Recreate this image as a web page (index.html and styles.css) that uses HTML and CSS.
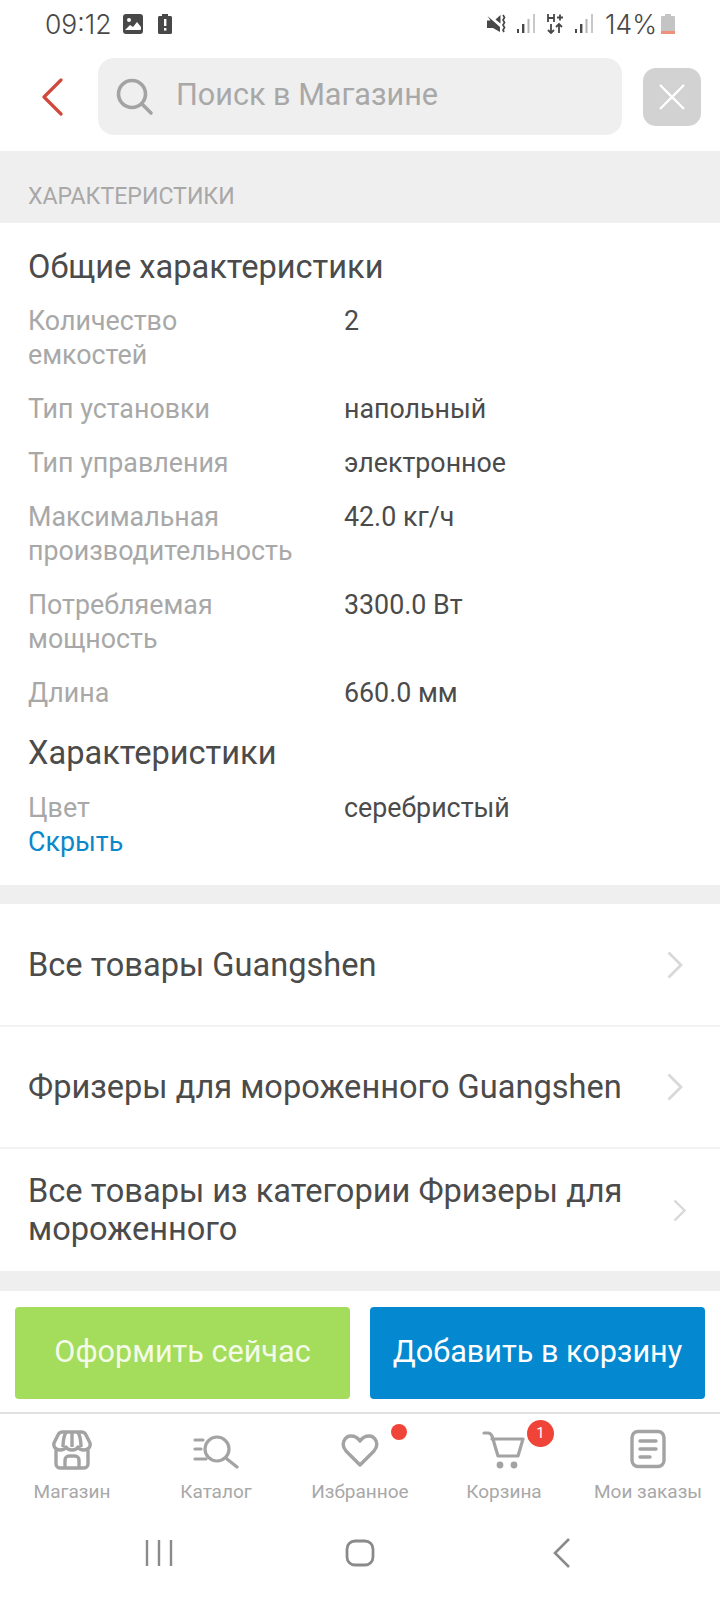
FILE: index.html
```html
<!DOCTYPE html>
<html>
<head>
  <meta charset="utf-8">
  <link rel="stylesheet" href="styles.css">
</head>
<body>
  <div class="status">
    <span class="clock">09:12</span>
    <svg width="22" height="22" viewBox="0 0 22 22"><rect x="1" y="1" width="20" height="20" rx="3" fill="#484848"/><circle cx="7" cy="7" r="2" fill="#fff"/><path d="M3 17l5-5 3 2 4-5 4 5v2a1 1 0 0 1-1 1H4z" fill="#fff"/></svg>
    <svg class="st-gap" width="16" height="22" viewBox="0 0 16 22"><path d="M5 1h6v2h3a2 2 0 0 1 1 1v16a2 2 0 0 1-1 1H2a2 2 0 0 1-1-1V4a2 2 0 0 1 1-1h3z" fill="#484848"/><rect x="7" y="6" width="2.400" height="7" fill="#fff"/><rect x="7" y="15" width="2.400" height="2.600" fill="#fff"/></svg>
    <span class="grow"></span>
    <svg width="20" height="22" viewBox="0 0 20 22"><path d="M1.500 3L14 14v5l-7-4H1V7.500h3.500z" fill="#484848"/><path d="M9.500 6.500L14.500 2v8.500z" fill="#484848"/><path d="M17 2l1.500 2.500-1.500 2.500 1.500 2.500-1.500 2.500 1.500 2.500-1.500 2.500 1 2" fill="none" stroke="#484848" stroke-width="1.700"/></svg>
    <svg class="sig" width="20" height="22" viewBox="0 0 20 22"><rect x="1" y="16" width="2" height="4" fill="#484848"/><rect x="6" y="11" width="2.400" height="9" fill="#484848"/><rect x="11.500" y="6" width="2" height="14" fill="#b5b5b5"/><rect x="17" y="1" width="2" height="19" fill="#c8c8c8"/></svg>
    <svg class="sig" width="18" height="22" viewBox="0 0 18 22"><path d="M2 1v8M8 1v8M2 5h6M11 4.500h6M14 1.500v6" stroke="#484848" stroke-width="1.800" fill="none"/><path d="M5 11v9M2 17l3 3 3-3M13 20v-9M10 14l3-3 3 3" stroke="#484848" stroke-width="1.800" fill="none"/></svg>
    <svg class="sig" width="20" height="22" viewBox="0 0 20 22"><rect x="1" y="16" width="2" height="4" fill="#484848"/><rect x="6" y="11" width="2.400" height="9" fill="#484848"/><rect x="11.500" y="6" width="2" height="14" fill="#b5b5b5"/><rect x="17" y="1" width="2" height="19" fill="#c8c8c8"/></svg>
    <span class="pct">14%</span>
    <svg class="batt" width="14" height="20" viewBox="0 0 14 20"><path d="M4 0h6v2h3a1 1 0 0 1 1 1v16a1 1 0 0 1-1 1H1a1 1 0 0 1-1-1V3a1 1 0 0 1 1-1h3z" fill="#c4c4c4"/><path d="M0 17h14v2a1 1 0 0 1-1 1H1a1 1 0 0 1-1-1z" fill="#f0907a"/></svg>
  </div>

  <div class="topbar">
    <svg class="back" width="22" height="38" viewBox="0 0 22 38"><path d="M20 2L3 19l17 17" fill="none" stroke="#d0493c" stroke-width="3.200" stroke-linecap="round" stroke-linejoin="round"/></svg>
    <div class="search">
      <svg width="38" height="38" viewBox="0 0 38 38"><circle cx="16" cy="16" r="13.500" fill="none" stroke="#a3a3a3" stroke-width="3.600"/><path d="M26 26l9 9" stroke="#a3a3a3" stroke-width="3.600" stroke-linecap="round"/></svg>
      <span class="search-text">Поиск в Магазине</span>
    </div>
    <div class="close">
      <svg width="26" height="26" viewBox="0 0 26 26"><path d="M1 1l24 24M25 1L1 25" stroke="#fff" stroke-width="2.400"/></svg>
    </div>
  </div>

  <div class="section-head">ХАРАКТЕРИСТИКИ</div>

  <div class="specs">
    <div class="spec-title">Общие характеристики</div>
    <div class="row"><div class="key">Количество<br>емкостей</div><div class="val">2</div></div>
    <div class="row"><div class="key">Тип установки</div><div class="val">напольный</div></div>
    <div class="row"><div class="key">Тип управления</div><div class="val">электронное</div></div>
    <div class="row"><div class="key">Максимальная<br>производительность</div><div class="val">42.0 кг/ч</div></div>
    <div class="row"><div class="key">Потребляемая<br>мощность</div><div class="val">3300.0 Вт</div></div>
    <div class="row"><div class="key">Длина</div><div class="val">660.0 мм</div></div>
    <div class="spec-title second">Характеристики</div>
    <div class="row last"><div class="key">Цвет</div><div class="val">серебристый</div></div>
    <div class="hide">Скрыть</div>
  </div>

  <div class="links">
    <div class="link"><span>Все товары Guangshen</span><svg width="16" height="28" viewBox="0 0 16 28"><path d="M1.500 1.500L14 14 1.500 26.500" fill="none" stroke="#d8d8d8" stroke-width="2.800"/></svg></div>
    <div class="link"><span>Фризеры для мороженного Guangshen</span><svg width="16" height="28" viewBox="0 0 16 28"><path d="M1.500 1.500L14 14 1.500 26.500" fill="none" stroke="#d8d8d8" stroke-width="2.800"/></svg></div>
    <div class="link tall"><span>Все товары из категории Фризеры для мороженного</span><svg width="13" height="23" viewBox="0 0 13 23"><path d="M1.500 1.500L11.500 11.500 1.500 21.500" fill="none" stroke="#d8d8d8" stroke-width="2.400"/></svg></div>
  </div>

  <div class="buttons">
    <div class="btn green">Оформить сейчас</div>
    <div class="btn blue">Добавить в корзину</div>
  </div>

  <div class="tabs">
    <div class="tab">
      <svg width="42" height="42" viewBox="0 0 42 42" fill="none" stroke="#a3a3a3" stroke-width="3.400" stroke-linejoin="round"><path d="M11 4h20a5 5 0 0 1 4 3l4 8c1 4-2 7-6 7-3 0-5-1-6-3-1 2-3 3-6 3s-5-1-6-3c-1 2-3 3-6 3-4 0-7-3-6-7l4-8a5 5 0 0 1 4-3z"/><path d="M15 4c-2 4-3 9-3 15M27 4c2 4 3 9 3 15M21 4v15"/><path d="M5 22v14a4 4 0 0 0 4 4h24a4 4 0 0 0 4-4V22"/><path d="M14 40V32a4 4 0 0 1 4-4h6a4 4 0 0 1 4 4v8"/></svg>
      <span>Магазин</span>
    </div>
    <div class="tab">
      <svg width="46" height="42" viewBox="0 0 46 42" fill="none" stroke="#a3a3a3" stroke-width="3.200" stroke-linecap="round"><path d="M2 12h8M2 21h6M2 31h11"/><circle cx="24" cy="21" r="12"/><path d="M34 31l10 8"/></svg>
      <span>Каталог</span>
    </div>
    <div class="tab">
      <svg width="40" height="42" viewBox="0 0 40 42" fill="none" stroke="#a3a3a3" stroke-width="3.400" stroke-linejoin="round"><path d="M20 37L6 23C0 16 5 8 11 8c4 0 7 2 9 5 2-3 5-5 9-5 6 0 11 8 5 15z"/></svg>
      <span>Избранное</span>
      <i class="dot"></i>
    </div>
    <div class="tab">
      <svg width="44" height="42" viewBox="0 0 44 42" fill="none" stroke="#a3a3a3" stroke-width="3.200" stroke-linecap="round" stroke-linejoin="round"><path d="M2 5h4c2 0 3 1 4 3l6 20h20l5-17H10"/><circle cx="18" cy="37" r="1.800" fill="#a3a3a3"/><circle cx="32" cy="37" r="1.800" fill="#a3a3a3"/></svg>
      <span>Корзина</span>
      <i class="badge">1</i>
    </div>
    <div class="tab">
      <svg width="36" height="42" viewBox="0 0 36 42" fill="none" stroke="#a3a3a3" stroke-width="3.400" stroke-linecap="round"><rect x="2" y="3.500" width="32" height="35" rx="6"/><path d="M10 13h16M10 21h16M10 29h10"/></svg>
      <span>Мои заказы</span>
    </div>
  </div>

  <div class="navbar">
    <svg width="28" height="28" viewBox="0 0 28 28"><path d="M2 1v26M14 1v26M26 1v26" stroke="#8a8a8a" stroke-width="2.400"/></svg>
    <svg width="30" height="28" viewBox="0 0 30 28"><rect x="2" y="2" width="26" height="24" rx="8" fill="none" stroke="#8a8a8a" stroke-width="2.800"/></svg>
    <svg class="nav-back" width="18" height="30" viewBox="0 0 18 30"><path d="M16 1L2 15l14 14" fill="none" stroke="#8a8a8a" stroke-width="2.600"/></svg>
  </div>
</body>
</html>
```

FILE: styles.css
```css
html, body {
  margin: 0;
  height: 1600px;
  overflow: hidden;
  background: #fff;
  font-family: Roboto, "Noto Sans", sans-serif;
}
.status {
  height: 48px;
  padding: 0 45px 0 45px;
  display: flex;
  align-items: center;
  color: #484848;
}
.clock {
  font-family: Inter, Roboto, sans-serif;
  font-size: 26.500px;
  font-weight: 300;
  margin-right: 11px;
}
.st-gap {
  margin-left: 13px;
}
.grow {
  flex: 1;
}
.sig {
  margin-left: 10px;
}
.pct {
  font-family: Inter, Roboto, sans-serif;
  font-size: 26.500px;
  font-weight: 300;
  margin-left: 11px;
}
.batt {
  margin-left: 4px;
}
.topbar {
  height: 103px;
  display: flex;
  align-items: center;
  padding: 0 0 0 41px;
  box-sizing: border-box;
}
.back {
  margin-right: 35px;
  margin-bottom: 6px;
}
.search {
  width: 524px;
  height: 77px;
  margin-bottom: 6px;
  background: #efefef;
  border-radius: 16px;
  display: flex;
  align-items: center;
  padding-left: 18px;
  box-sizing: border-box;
}
.search-text {
  font-size: 30.600px;
  color: #a8a8a8;
  margin-left: 22px;
  margin-bottom: 4px;
}
.close {
  width: 58px;
  height: 58px;
  margin-left: 21px;
  margin-bottom: 6px;
  background: #d2d2d2;
  border-radius: 13px;
  display: flex;
  align-items: center;
  justify-content: center;
}
.section-head {
  height: 72px;
  background: #efefef;
  padding: 31px 0 0 28px;
  box-sizing: border-box;
  font-size: 23.100px;
  color: #a8a8a8;
  line-height: 29px;
}
.specs {
  height: 681px;
  box-sizing: border-box;
  padding: 25px 0 0 28px;
  border-bottom: 19px solid #efefef;
}
.spec-title {
  font-size: 32.600px;
  line-height: 38px;
  color: #4b4b4b;
  margin-bottom: 18px;
}
.spec-title.second {
  margin-top: 24px;
  margin-bottom: 19px;
}
.row {
  display: flex;
  font-size: 26.800px;
  line-height: 34px;
  margin-bottom: 20px;
}
.row.last {
  margin-bottom: 0;
}
.key {
  width: 316px;
  color: #a8a8a8;
}
.val {
  color: #4b4b4b;
}
.hide {
  font-size: 26.800px;
  line-height: 34px;
  color: #0b88c9;
}
.links {
  border-bottom: 20px solid #efefef;
}
.link {
  height: 122px;
  box-sizing: border-box;
  padding: 0 37px 0 28px;
  display: flex;
  align-items: center;
  justify-content: space-between;
  font-size: 32.600px;
  line-height: 38px;
  color: #4b4b4b;
  border-bottom: 2px solid #f2f2f2;
}
.link:first-child {
  height: 123px;
}
.link.tall {
  border-bottom: 0;
  padding-right: 34px;
}
.link.tall span {
  width: 625px;
}
.buttons {
  display: flex;
  gap: 20px;
  padding: 16px 15px 13px;
  border-bottom: 2px solid #e0e0e0;
}
.btn {
  flex: 1;
  height: 92px;
  box-sizing: border-box;
  padding-bottom: 3px;
  border-radius: 4px;
  color: #fff;
  font-size: 30.600px;
  display: flex;
  align-items: center;
  justify-content: center;
}
.green {
  background: #a4dc5b;
  color: #f3fbe8;
}
.blue {
  background: #0488d0;
}
.tabs {
  display: flex;
  height: 108px;
}
.tab {
  position: relative;
  flex: 1;
  display: flex;
  flex-direction: column;
  align-items: center;
  padding-top: 14px;
  box-sizing: border-box;
  font-size: 19px;
  color: #a8a8a8;
}
.tab svg {
  margin-bottom: 10px;
}
.dot {
  position: absolute;
  left: 103px;
  top: 10px;
  width: 16px;
  height: 16px;
  border-radius: 50%;
  background: #f04438;
}
.badge {
  position: absolute;
  left: 95px;
  top: 6px;
  width: 27px;
  height: 27px;
  border-radius: 50%;
  background: #f04438;
  color: #fff;
  font-style: normal;
  font-size: 15px;
  line-height: 27px;
  text-align: center;
}
.navbar {
  display: flex;
  align-items: center;
  gap: 172px;
  height: 72px;
  padding: 0 0 10px 145px;
  box-sizing: border-box;
}
.nav-back {
  margin-left: 6px;
}
```
